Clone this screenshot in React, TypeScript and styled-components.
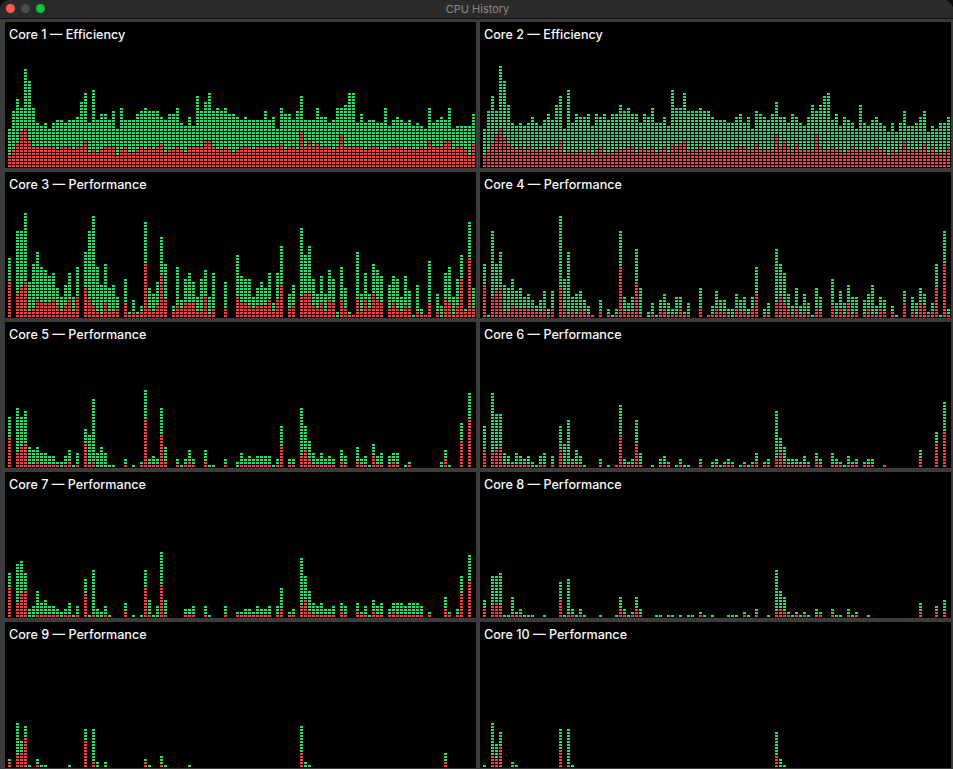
import styled, { createGlobalStyle } from 'styled-components'

const COLS = 117
const CHART_H = 108

type Core = { name: string; totals: number[]; reds: number[] }

// only a few columns are lit on the idle cores: [column, total, red]
const spots = (items: [number, number, number][]) => {
  const totals = new Array(COLS).fill(0)
  const reds = new Array(COLS).fill(0)
  items.forEach(([i, t, r]) => {
    totals[i] = t
    reds[i] = r
  })
  return { totals, reds }
}

const cores: Core[] = [
  {
    name: 'Core 1 — Efficiency',
    totals: [
      13, 19, 23, 20, 33, 29, 20, 15, 14, 15, 13, 15, 16, 16, 15, 16, 16, 17, 22, 25, 15, 26, 16, 18, 18, 16, 19, 13, 20,
      16, 16, 16, 18, 19, 20, 19, 19, 19, 17, 16, 18, 18, 20, 15, 14, 17, 14, 24, 19, 22, 25, 19, 20, 19, 20, 18, 18, 17,
      16, 17, 16, 16, 16, 16, 19, 16, 17, 13, 20, 18, 18, 16, 19, 24, 16, 16, 16, 20, 17, 17, 15, 16, 20, 20, 21, 25, 25,
      15, 18, 15, 16, 16, 15, 15, 20, 14, 16, 17, 16, 15, 16, 14, 15, 14, 13, 20, 15, 16, 17, 16, 20, 13, 14, 14, 14, 14,
      18,
    ],
    reds: [
      4, 6, 8, 12, 13, 9, 7, 7, 7, 7, 7, 7, 6, 7, 7, 7, 6, 7, 7, 9, 5, 6, 5, 6, 7, 7, 7, 4, 6, 7, 5, 5, 6, 7, 6, 7, 6, 7,
      8, 5, 6, 6, 7, 6, 5, 7, 7, 7, 7, 9, 9, 7, 6, 6, 7, 6, 5, 6, 7, 7, 7, 6, 7, 7, 7, 7, 7, 7, 8, 6, 7, 7, 6, 12, 7, 9,
      7, 8, 7, 7, 7, 6, 7, 11, 7, 7, 7, 7, 7, 6, 7, 7, 7, 6, 6, 7, 7, 7, 7, 6, 7, 6, 6, 7, 6, 9, 7, 7, 7, 9, 9, 6, 7, 7,
      6, 4, 8,
    ],
  },
  {
    name: 'Core 2 — Efficiency',
    totals: [
      13, 19, 24, 19, 34, 29, 21, 15, 14, 15, 14, 15, 17, 15, 14, 16, 18, 16, 21, 24, 13, 26, 15, 18, 17, 17, 18, 14, 18,
      17, 18, 16, 18, 18, 21, 19, 20, 18, 18, 15, 18, 17, 20, 15, 15, 17, 14, 26, 20, 20, 25, 19, 19, 19, 20, 19, 19, 17,
      16, 16, 16, 15, 15, 17, 18, 15, 17, 13, 19, 18, 17, 16, 18, 22, 17, 17, 15, 18, 17, 15, 14, 17, 21, 19, 21, 24, 25,
      16, 18, 14, 17, 16, 15, 13, 21, 15, 14, 16, 17, 15, 14, 12, 15, 12, 15, 19, 14, 14, 15, 17, 19, 12, 14, 13, 15, 15,
      17,
    ],
    reds: [
      4, 6, 8, 11, 13, 10, 8, 7, 6, 7, 6, 7, 6, 6, 6, 7, 6, 7, 6, 9, 5, 6, 5, 5, 6, 5, 6, 4, 6, 7, 5, 5, 5, 6, 6, 6, 7, 7,
      5, 7, 6, 6, 7, 5, 6, 7, 5, 8, 7, 8, 9, 6, 6, 6, 7, 6, 6, 7, 6, 6, 6, 6, 6, 7, 7, 7, 6, 6, 8, 6, 6, 6, 6, 11, 7, 9,
      7, 6, 8, 6, 6, 6, 6, 11, 7, 6, 6, 7, 6, 6, 5, 6, 7, 6, 6, 6, 6, 6, 7, 6, 6, 4, 6, 5, 6, 9, 6, 6, 6, 6, 8, 5, 7, 5,
      5, 5, 7,
    ],
  },
  {
    name: 'Core 3 — Performance',
    totals: [
      20, 0, 29, 29, 35, 12, 18, 22, 17, 16, 14, 15, 10, 7, 11, 15, 7, 17, 0, 22, 29, 34, 17, 11, 18, 10, 11, 7, 0, 13, 2,
      6, 2, 4, 32, 10, 8, 12, 27, 18, 0, 4, 17, 6, 13, 15, 12, 7, 13, 16, 7, 15, 0, 0, 12, 0, 0, 21, 14, 13, 13, 7, 10,
      12, 10, 15, 5, 15, 24, 0, 8, 11, 0, 30, 21, 24, 13, 8, 14, 8, 16, 13, 2, 17, 10, 2, 1, 22, 8, 15, 8, 18, 16, 14, 0,
      11, 14, 13, 7, 14, 9, 1, 11, 3, 1, 19, 0, 8, 4, 15, 17, 7, 13, 21, 3, 32, 10,
    ],
    reds: [
      12, 0, 8, 10, 12, 2, 3, 6, 5, 5, 5, 6, 4, 2, 4, 6, 2, 7, 0, 10, 6, 4, 2, 1, 5, 2, 2, 3, 0, 5, 1, 2, 1, 2, 18, 3, 2,
      4, 14, 6, 0, 2, 4, 3, 5, 5, 5, 2, 2, 7, 1, 3, 0, 0, 3, 0, 0, 7, 5, 5, 4, 3, 4, 4, 4, 6, 2, 6, 11, 0, 3, 4, 0, 7, 8,
      8, 4, 3, 5, 2, 6, 5, 0, 6, 3, 1, 1, 6, 2, 6, 3, 8, 6, 5, 0, 3, 5, 3, 2, 4, 3, 0, 2, 1, 1, 5, 0, 2, 0, 6, 5, 1, 4,
      13, 2, 20, 3,
    ],
  },
  {
    name: 'Core 4 — Performance',
    totals: [
      18, 1, 29, 18, 22, 11, 10, 13, 9, 10, 7, 8, 6, 4, 6, 9, 3, 9, 0, 34, 13, 22, 7, 8, 9, 6, 4, 1, 0, 6, 0, 3, 1, 3, 29,
      7, 5, 7, 23, 10, 0, 2, 5, 1, 6, 8, 5, 3, 7, 7, 2, 5, 0, 0, 10, 0, 1, 4, 9, 6, 6, 3, 3, 8, 6, 7, 3, 7, 17, 0, 3, 5,
      0, 23, 18, 15, 8, 4, 10, 4, 8, 5, 1, 10, 7, 0, 0, 13, 5, 9, 5, 11, 7, 7, 0, 6, 8, 11, 4, 7, 6, 0, 4, 1, 0, 9, 0, 7,
      5, 10, 8, 2, 5, 18, 1, 29, 3,
    ],
    reds: [
      11, 0, 7, 9, 10, 2, 2, 4, 3, 3, 3, 3, 3, 2, 2, 3, 1, 3, 0, 10, 3, 1, 2, 1, 3, 2, 1, 1, 0, 2, 0, 1, 0, 1, 17, 2, 2,
      2, 12, 1, 0, 0, 1, 0, 2, 3, 1, 1, 1, 3, 1, 1, 0, 0, 3, 0, 1, 1, 3, 2, 2, 1, 0, 3, 2, 2, 1, 3, 8, 0, 1, 1, 0, 5, 7,
      5, 3, 1, 3, 1, 2, 1, 0, 3, 2, 0, 0, 4, 1, 3, 1, 5, 1, 2, 0, 1, 3, 1, 1, 3, 2, 0, 2, 0, 0, 5, 0, 2, 1, 5, 4, 1, 2,
      10, 0, 18, 1,
    ],
  },
  {
    name: 'Core 5 — Performance',
    totals: [
      17, 0, 20, 17, 19, 7, 6, 7, 5, 5, 4, 4, 2, 2, 4, 6, 1, 5, 0, 13, 11, 23, 5, 7, 5, 1, 1, 0, 0, 3, 0, 1, 0, 2, 26, 3,
      4, 3, 20, 7, 0, 0, 3, 1, 3, 6, 3, 0, 0, 6, 1, 1, 0, 0, 3, 0, 0, 2, 5, 3, 4, 3, 4, 4, 4, 4, 1, 3, 14, 0, 3, 3, 0, 20,
      14, 9, 5, 3, 5, 3, 4, 3, 0, 6, 4, 0, 0, 7, 3, 4, 1, 8, 4, 5, 0, 4, 5, 5, 0, 1, 2, 0, 0, 0, 0, 0, 0, 0, 2, 6, 1, 0,
      0, 15, 0, 25, 0,
    ],
    reds: [
      10, 0, 5, 7, 8, 1, 1, 2, 1, 1, 1, 1, 1, 0, 1, 2, 0, 1, 0, 8, 1, 2, 0, 0, 0, 0, 0, 0, 0, 1, 0, 0, 0, 1, 16, 1, 1, 1,
      11, 2, 0, 0, 1, 0, 1, 2, 1, 0, 0, 2, 0, 0, 0, 0, 1, 0, 0, 0, 1, 1, 1, 1, 1, 1, 1, 1, 0, 1, 7, 0, 1, 1, 0, 4, 6, 3,
      1, 1, 1, 1, 1, 1, 0, 2, 1, 0, 0, 2, 1, 1, 0, 4, 1, 1, 0, 1, 2, 1, 0, 0, 1, 0, 0, 0, 0, 0, 0, 0, 0, 3, 0, 0, 0, 9, 0,
      16, 0,
    ],
  },
  {
    name: 'Core 6 — Performance',
    totals: [
      14, 0, 25, 18, 18, 5, 4, 2, 5, 4, 3, 4, 2, 1, 4, 5, 0, 4, 0, 14, 8, 16, 3, 6, 4, 1, 0, 0, 0, 3, 0, 1, 0, 1, 21, 3, 2,
      3, 16, 5, 0, 0, 1, 0, 3, 4, 2, 0, 1, 3, 1, 1, 0, 0, 3, 0, 0, 2, 3, 1, 2, 3, 2, 0, 1, 2, 1, 2, 5, 0, 2, 3, 0, 19, 10,
      7, 3, 3, 3, 2, 4, 2, 0, 5, 3, 0, 0, 5, 3, 2, 1, 4, 2, 3, 0, 2, 3, 3, 0, 0, 1, 0, 0, 0, 0, 0, 0, 0, 0, 6, 0, 0, 0, 12,
      0, 22, 0,
    ],
    reds: [
      6, 0, 5, 6, 7, 1, 1, 1, 1, 1, 1, 1, 0, 0, 1, 1, 0, 1, 0, 6, 1, 1, 1, 1, 1, 0, 0, 0, 0, 1, 0, 0, 0, 1, 11, 1, 1, 1, 8,
      1, 0, 0, 0, 0, 1, 1, 1, 0, 0, 1, 0, 0, 0, 0, 1, 0, 0, 0, 1, 0, 1, 1, 1, 0, 0, 1, 0, 1, 2, 0, 1, 1, 0, 3, 5, 2, 1, 1,
      1, 1, 1, 1, 0, 2, 1, 0, 0, 1, 1, 1, 0, 1, 1, 1, 0, 1, 1, 1, 0, 0, 1, 0, 0, 0, 0, 0, 0, 0, 0, 3, 0, 0, 0, 8, 0, 12, 0,
    ],
  },
  {
    name: 'Core 7 — Performance',
    totals: [
      15, 0, 18, 19, 15, 3, 4, 9, 5, 6, 4, 4, 3, 2, 3, 5, 1, 4, 0, 13, 1, 16, 3, 2, 4, 1, 0, 0, 0, 5, 0, 1, 0, 1, 16, 6, 1,
      4, 22, 6, 0, 0, 0, 0, 3, 3, 4, 0, 0, 4, 1, 0, 0, 0, 4, 0, 0, 2, 2, 3, 3, 2, 4, 3, 3, 4, 0, 4, 10, 0, 2, 3, 0, 20, 14,
      9, 5, 4, 5, 3, 3, 4, 0, 5, 4, 0, 0, 5, 2, 4, 1, 6, 4, 5, 0, 3, 5, 5, 5, 4, 5, 5, 5, 4, 0, 2, 0, 0, 0, 7, 2, 0, 3, 14,
      0, 21, 0,
    ],
    reds: [
      10, 0, 5, 8, 9, 0, 0, 1, 1, 1, 1, 1, 1, 0, 1, 1, 0, 1, 0, 8, 0, 1, 0, 0, 1, 0, 0, 0, 0, 2, 0, 0, 0, 0, 10, 1, 0, 0,
      11, 1, 0, 0, 0, 0, 1, 1, 1, 0, 0, 1, 0, 0, 0, 0, 1, 0, 0, 1, 1, 1, 1, 1, 1, 1, 1, 1, 0, 1, 3, 0, 1, 1, 0, 4, 6, 2, 1,
      1, 1, 1, 1, 1, 0, 2, 1, 0, 0, 2, 1, 1, 0, 2, 1, 1, 0, 1, 2, 1, 1, 1, 1, 1, 1, 1, 0, 1, 0, 0, 0, 3, 1, 0, 1, 8, 0, 12,
      0,
    ],
  },
  {
    name: 'Core 8 — Performance',
    totals: [
      6, 0, 14, 14, 15, 1, 1, 7, 2, 3, 1, 1, 1, 0, 0, 1, 0, 0, 0, 12, 1, 13, 3, 1, 3, 1, 0, 0, 0, 1, 0, 0, 0, 1, 7, 3, 1, 2,
      7, 3, 0, 0, 0, 1, 1, 0, 1, 1, 0, 1, 0, 1, 1, 0, 2, 1, 0, 1, 0, 0, 0, 1, 1, 1, 0, 2, 1, 0, 3, 0, 0, 1, 0, 16, 9, 7, 2,
      1, 2, 1, 2, 1, 0, 3, 2, 0, 0, 3, 1, 1, 0, 3, 1, 2, 0, 0, 1, 0, 0, 0, 0, 0, 0, 0, 0, 0, 0, 0, 0, 5, 0, 0, 0, 4, 0, 6,
      0,
    ],
    reds: [
      3, 0, 4, 5, 4, 0, 0, 1, 1, 1, 0, 0, 0, 0, 0, 0, 0, 0, 0, 6, 0, 1, 1, 0, 1, 0, 0, 0, 0, 0, 0, 0, 0, 0, 3, 1, 0, 1, 3,
      1, 0, 0, 0, 0, 0, 0, 0, 0, 0, 0, 0, 0, 0, 0, 1, 0, 0, 0, 0, 0, 0, 0, 0, 0, 0, 1, 0, 0, 1, 0, 0, 0, 0, 2, 3, 2, 1, 0,
      1, 0, 1, 0, 0, 1, 1, 0, 0, 1, 0, 0, 0, 1, 0, 1, 0, 0, 0, 0, 0, 0, 0, 0, 0, 0, 0, 0, 0, 0, 0, 2, 0, 0, 0, 2, 0, 2, 0,
    ],
  },
  {
    name: 'Core 9 — Performance',
    ...spots([
      [0, 3, 2], [2, 15, 4], [3, 9, 5], [4, 14, 10], [5, 1, 0], [7, 3, 1], [8, 1, 0], [9, 1, 0], [15, 1, 0], [19, 13, 9],
      [21, 13, 2], [22, 2, 0], [24, 2, 0], [34, 3, 2], [35, 1, 0], [38, 4, 1], [39, 1, 0], [45, 1, 0], [73, 14, 5],
      [74, 2, 0], [75, 1, 0], [109, 5, 2],
    ]),
  },
  {
    name: 'Core 10 — Performance',
    ...spots([
      [0, 1, 0], [2, 15, 4], [3, 8, 3], [4, 12, 7], [7, 2, 0], [8, 1, 0], [19, 13, 6], [21, 13, 1], [22, 1, 0], [73, 12, 4],
      [74, 3, 0], [75, 1, 0],
    ]),
  },
]

function Chart({ totals, reds }: { totals: number[]; reds: number[] }) {
  const segments: { x: number; y: number; hot: boolean }[] = []
  totals.forEach((total, col) => {
    for (let row = 0; row < total; row++) {
      segments.push({ x: col * 4, y: CHART_H - 3 - row * 3, hot: row < reds[col] })
    }
  })
  return (
    <ChartSvg width={COLS * 4} height={CHART_H} viewBox={`0 0 ${COLS * 4} ${CHART_H}`}>
      {segments.map((s) => (
        <Segment key={`${s.x}-${s.y}`} x={s.x} y={s.y} width={3} height={2} $hot={s.hot} />
      ))}
    </ChartSvg>
  )
}

export default function App() {
  return (
    <>
      <GlobalStyle />
      <Window>
        <TitleBar>
          <Lights>
            <Light $color="#ff5a52" />
            <Light $color="#4b4b4b" />
            <Light $color="#12c13c" />
          </Lights>
          <Title>CPU History</Title>
        </TitleBar>
        <Grid>
          {cores.map((core) => (
            <Panel key={core.name}>
              <Label>{core.name}</Label>
              <Chart totals={core.totals} reds={core.reds} />
            </Panel>
          ))}
        </Grid>
      </Window>
    </>
  )
}

const GlobalStyle = createGlobalStyle`
  html, body {
    margin: 0;
    background: #0c0c0c;
  }
`

const Window = styled.div`
  width: 953px;
  height: 769px;
  overflow: hidden;
  background: #3c3c3c;
  border-radius: 10px 10px 0 0;
  font-family: Inter, 'Liberation Sans', sans-serif;
`

const TitleBar = styled.div`
  position: relative;
  height: 18px;
  display: flex;
  align-items: center;
  justify-content: center;
  background: #2a2a2a;
  border-bottom: 1px solid #0e0e0e;
`

const Lights = styled.div`
  position: absolute;
  left: 6px;
  top: 4px;
  display: flex;
  gap: 6px;
`

const Light = styled.span<{ $color: string }>`
  width: 9px;
  height: 9px;
  border-radius: 50%;
  background: ${(p) => p.$color};
`

const Title = styled.div`
  font-size: 11px;
  line-height: 16px;
  color: #8c8c8c;
  margin-left: 2px;
`

const Grid = styled.div`
  display: grid;
  grid-template-columns: 471px 471px;
  gap: 4px;
  padding: 3px 2px 0 5px;
`

const Panel = styled.div`
  height: 146px;
  display: flex;
  flex-direction: column;
  background: #000;
`

const Label = styled.div`
  padding: 5px 0 0 4px;
  font-size: 12.6px;
  font-weight: 500;
  line-height: 15px;
  color: #f8f8f8;
`

const ChartSvg = styled.svg`
  display: block;
  margin: auto 0 0 3px;
  shape-rendering: crispEdges;
`

const Segment = styled.rect<{ $hot: boolean }>`
  fill: ${(p) => (p.$hot ? '#ff3d41' : '#22e065')};
`
